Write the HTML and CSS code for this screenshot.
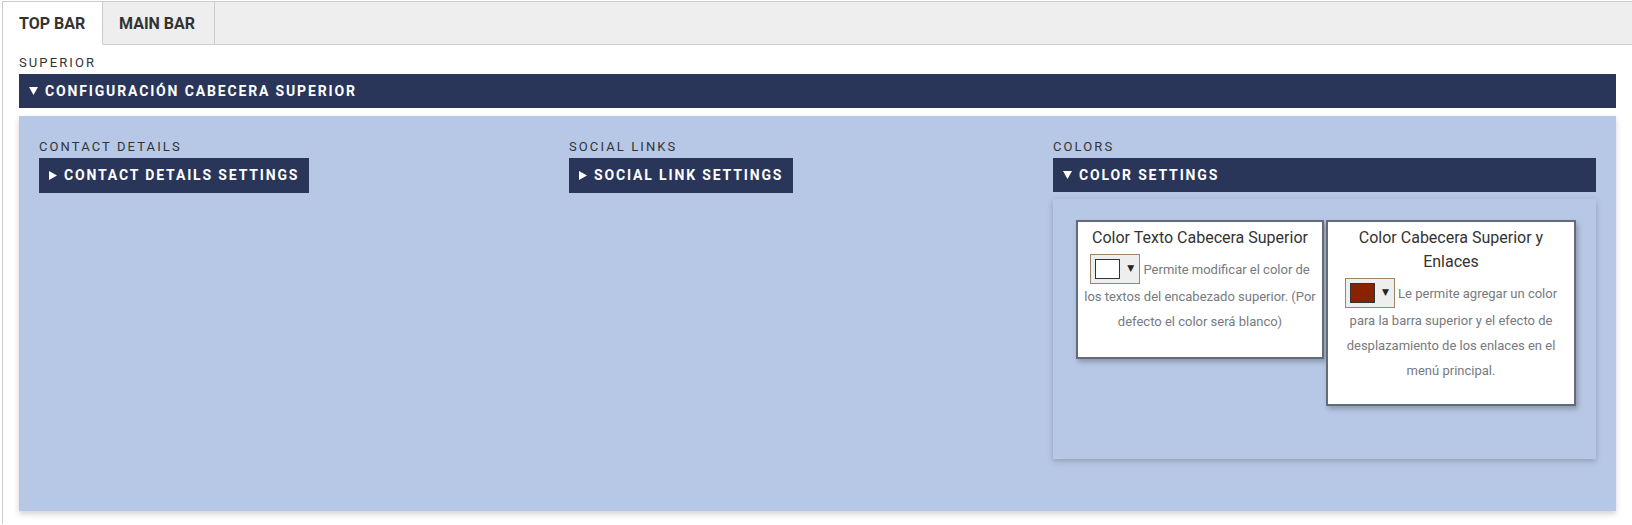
FILE: index.html
```html
<!DOCTYPE html>
<html>
<head>
<meta charset="utf-8">
<link rel="stylesheet" href="styles.css">
</head>
<body>
<div class="frame">
  <div class="tabs">
    <div class="tab active">TOP BAR</div>
    <div class="tab">MAIN BAR</div>
    <div class="tab-rest"></div>
  </div>
  <div class="content">
    <div class="label">SUPERIOR</div>
    <div class="bar wide"><svg class="tri" width="9" height="8" viewBox="0 0 9 8"><path d="M0 0H9L4.5 8Z" fill="#fff"/></svg>CONFIGURACIÓN CABECERA SUPERIOR</div>
    <div class="panel">
      <div class="col">
        <div class="label">CONTACT DETAILS</div>
        <div class="bar btn"><svg class="tri" width="8" height="9" viewBox="0 0 8 9"><path d="M0 0V9L8 4.5Z" fill="#fff"/></svg>CONTACT DETAILS SETTINGS</div>
      </div>
      <div class="col">
        <div class="label">SOCIAL LINKS</div>
        <div class="bar btn"><svg class="tri" width="8" height="9" viewBox="0 0 8 9"><path d="M0 0V9L8 4.5Z" fill="#fff"/></svg>SOCIAL LINK SETTINGS</div>
      </div>
      <div class="col">
        <div class="label">COLORS</div>
        <div class="bar wide"><svg class="tri" width="9" height="8" viewBox="0 0 9 8"><path d="M0 0H9L4.5 8Z" fill="#fff"/></svg>COLOR SETTINGS</div>
        <div class="inner">
          <div class="card c1">
            <div class="title">Color Texto Cabecera Superior</div>
            <div class="desc"><span class="swatch"><span class="chip white"></span><span class="arr">▼</span></span> Permite modificar el color de<br>los textos del encabezado superior. (Por<br>defecto el color será blanco)</div>
          </div>
          <div class="card c2">
            <div class="title">Color Cabecera Superior y<br>Enlaces</div>
            <div class="desc"><span class="swatch"><span class="chip red"></span><span class="arr">▼</span></span> Le permite agregar un color<br>para la barra superior y el efecto de<br>desplazamiento de los enlaces en el<br>menú principal.</div>
          </div>
        </div>
      </div>
    </div>
  </div>
</div>
</body>
</html>
```
FILE: styles.css
```css
html, body {
  margin: 0;
  padding: 0;
  background: #fff;
  font-family: Roboto, "Liberation Sans", sans-serif;
  color: #333;
}
.frame {
  margin: 1px 0 0 2px;
  border-left: 1px solid #ccc;
  border-top: 1px solid #ccc;
  height: 523px;
  box-sizing: border-box;
}
.tabs {
  display: flex;
  height: 43px;
  background: #eee;
}
.tab {
  font-weight: 700;
  font-size: 16px;
  line-height: 43px;
  color: #333;
  border-bottom: 1px solid #ccc;
  border-right: 1px solid #ccc;
  padding: 0 16px;
  width: 79px;
}
.tab.active {
  background: #fff;
  border-bottom-color: #fff;
  width: 67px;
}
.tab-rest {
  flex: 1;
  border-bottom: 1px solid #ccc;
}
.content {
  padding: 9px 16px 0 16px;
}
.label {
  font-size: 13px;
  line-height: 18px;
  letter-spacing: 2.1px;
  color: #333;
  margin-bottom: 2px;
}
.bar {
  background: #2a3659;
  color: #fff;
  font-weight: 700;
  font-size: 14px;
  letter-spacing: 1.85px;
  height: 35px;
  line-height: 35px;
  padding: 0 10px;
  display: flex;
  align-items: center;
  box-sizing: border-box;
  white-space: nowrap;
}
.bar.wide { height: 34px; }
.tri { margin-right: 7px; flex: none; }
.btn { display: inline-flex; }
.panel {
  margin-top: 8px;
  background: #b7c8e6;
  height: 395px;
  box-sizing: border-box;
  padding: 22px 20px 20px 20px;
  display: grid;
  grid-template-columns: 510px 464px 1fr;
  column-gap: 20px;
  align-items: start;
  box-shadow: 0 3px 6px rgba(0,0,0,0.18);
}
.inner {
  margin-top: 7px;
  height: 260px;
  background: #b7c8e6;
  box-shadow: 0 2px 6px rgba(0,0,0,0.22);
  padding: 21px 0 0 23px;
  box-sizing: border-box;
  display: flex;
  align-items: flex-start;
  gap: 2px;
}
.card {
  background: #fff;
  border: 2px solid #646a77;
  box-shadow: 2px 3px 5px rgba(0,0,0,0.25);
  text-align: center;
  padding: 4px 6px 0 6px;
  box-sizing: border-box;
}
.c1 { width: 248px; height: 139px; }
.c2 { width: 250px; height: 186px; }
.title {
  font-size: 16px;
  line-height: 24px;
  color: #333;
  margin-bottom: 7px;
}
.desc {
  font-size: 13px;
  line-height: 25px;
  color: #777a80;
  white-space: nowrap;
}
.swatch {
  display: inline-flex;
  align-items: center;
  vertical-align: middle;
  width: 50px;
  height: 30px;
  box-sizing: border-box;
  border: 1px solid #a08468;
  background: #eee;
  padding-left: 4px;
  margin-top: -4px;
}
.chip {
  width: 25px;
  height: 20px;
  box-sizing: border-box;
  border: 1px solid #333;
}
.chip.white { background: #fff; }
.chip.red { background: #8a2200; }
.arr {
  font-family: "DejaVu Sans", sans-serif;
  font-size: 9px;
  color: #222;
  margin-left: 7px;
  line-height: 1;
}
```
